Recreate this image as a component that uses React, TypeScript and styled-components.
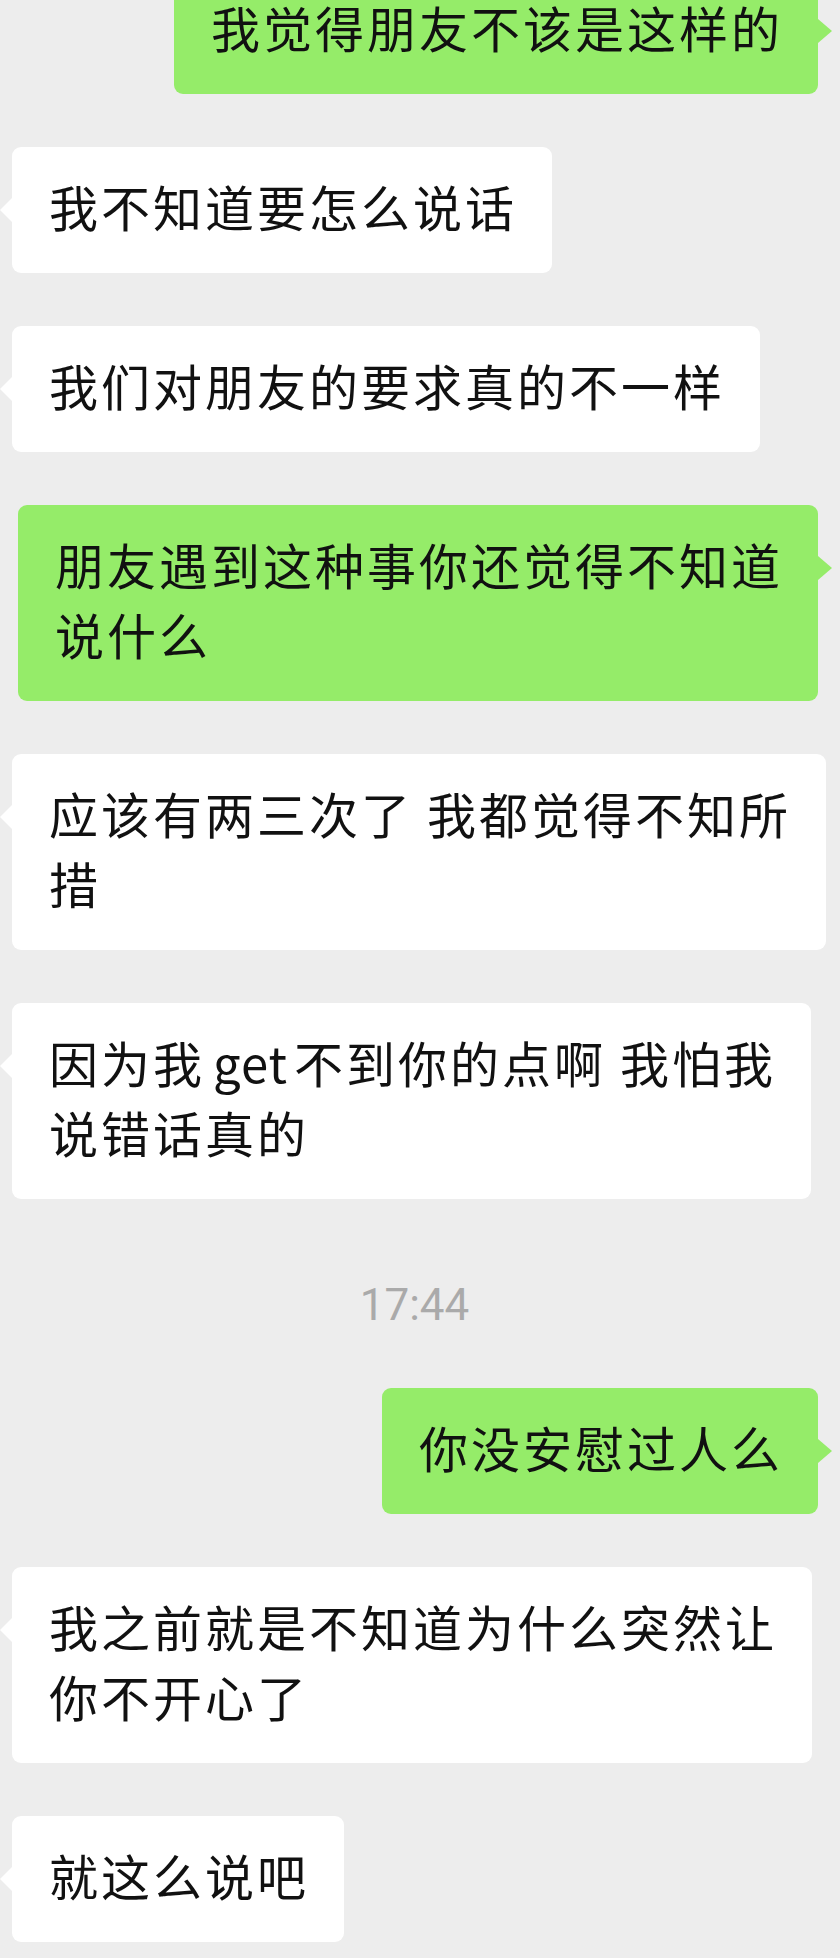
import { createGlobalStyle } from "styled-components";
import styled, { css } from "styled-components";

const GlobalStyle = createGlobalStyle`
  html, body {
    margin: 0;
    padding: 0;
    background: #ededed;
    overflow: hidden;
  }
  body {
    font-family: "Noto Sans CJK SC", "Noto Sans", sans-serif;
  }
`;

const Screen = styled.div`
  width: 840px;
  height: 1958px;
  background: #ededed;
  overflow: hidden;
`;

const Thread = styled.div`
  display: flex;
  flex-direction: column;
  gap: 53px;
  margin-top: -32px;
`;

const Row = styled.div<{ $mine?: boolean }>`
  display: flex;
  justify-content: ${(p) => (p.$mine ? "flex-end" : "flex-start")};
  padding: ${(p) => (p.$mine ? "0 22px 0 0" : "0 0 0 12px")};
`;

const Bubble = styled.div<{ $mine?: boolean }>`
  position: relative;
  padding: 24px 35px 32px 37px;
  border-radius: 9px;
  background: #ffffff;
  color: #111111;
  font-family: "Noto Sans CJK SC", "Noto Sans", sans-serif;
  font-size: 49px;
  line-height: 70px;
  letter-spacing: 3px;
  white-space: nowrap;

  &::before {
    content: "";
    position: absolute;
    top: 51px;
    width: 0;
    height: 0;
    border-top: 12px solid transparent;
    border-bottom: 12px solid transparent;
  }

  ${(p) =>
    p.$mine
      ? css`
          background: #95ec69;
          &::before {
            right: -14px;
            border-left: 14px solid #95ec69;
          }
        `
      : css`
          &::before {
            left: -12px;
            border-right: 12px solid #ffffff;
          }
        `}
`;

const Line = styled.div``;

// latin words get a little air on each side, like the phone does
const Latin = styled.span`
  margin: 0 6px 0 8px;
  letter-spacing: 1px;
`;

const TimeRow = styled.div`
  display: flex;
  justify-content: center;
  padding: 28px 11px 5px 0;
`;

const Time = styled.span`
  font-family: Roboto, "Noto Sans", sans-serif;
  font-size: 44px;
  line-height: 50px;
  color: #aaaaaa;
`;

type Item =
  | { kind: "msg"; mine: boolean; lines: string[] }
  | { kind: "time"; text: string };

const items: Item[] = [
  { kind: "msg", mine: true, lines: ["我觉得朋友不该是这样的"] },
  { kind: "msg", mine: false, lines: ["我不知道要怎么说话"] },
  { kind: "msg", mine: false, lines: ["我们对朋友的要求真的不一样"] },
  { kind: "msg", mine: true, lines: ["朋友遇到这种事你还觉得不知道", "说什么"] },
  { kind: "msg", mine: false, lines: ["应该有两三次了 我都觉得不知所", "措"] },
  { kind: "msg", mine: false, lines: ["因为我get不到你的点啊 我怕我", "说错话真的"] },
  { kind: "time", text: "17:44" },
  { kind: "msg", mine: true, lines: ["你没安慰过人么"] },
  { kind: "msg", mine: false, lines: ["我之前就是不知道为什么突然让", "你不开心了"] },
  { kind: "msg", mine: false, lines: ["就这么说吧"] },
];

const renderLine = (text: string) =>
  text.split(/([A-Za-z]+)/).map((part, k) =>
    /^[A-Za-z]+$/.test(part) ? <Latin key={k}>{part}</Latin> : part
  );

export default function App() {
  return (
    <Screen>
      <GlobalStyle />
      <Thread>
        {items.map((item, i) =>
          item.kind === "time" ? (
            <TimeRow key={i}>
              <Time>{item.text}</Time>
            </TimeRow>
          ) : (
            <Row key={i} $mine={item.mine}>
              <Bubble $mine={item.mine}>
                {item.lines.map((l, j) => (
                  <Line key={j}>{renderLine(l)}</Line>
                ))}
              </Bubble>
            </Row>
          )
        )}
      </Thread>
    </Screen>
  );
}
